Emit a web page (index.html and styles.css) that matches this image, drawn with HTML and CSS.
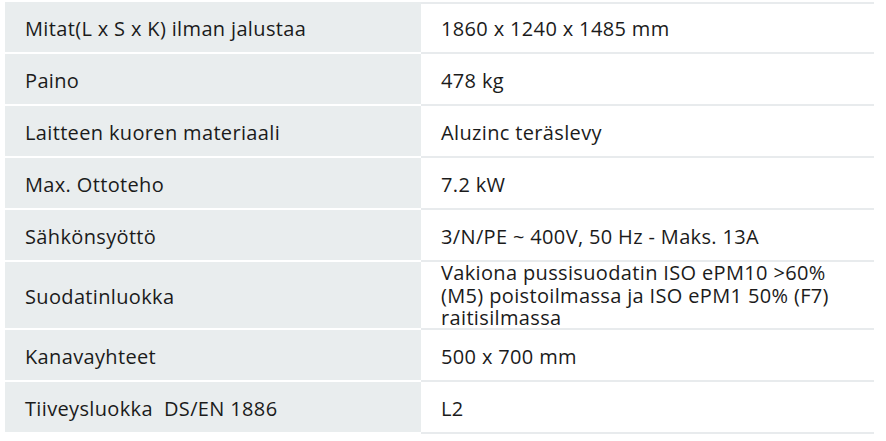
FILE: index.html
```html
<!DOCTYPE html>
<html lang="fi">
<head>
<meta charset="utf-8">
<title>Tekniset tiedot</title>
<link rel="stylesheet" href="styles.css">
</head>
<body>
<div class="specs">
  <div class="row first"><div class="k">Mitat(L x S x K) ilman jalustaa</div><div class="v">1860 x 1240 x 1485 mm</div></div>
  <div class="row"><div class="k">Paino</div><div class="v">478 kg</div></div>
  <div class="row"><div class="k">Laitteen kuoren materiaali</div><div class="v">Aluzinc teräslevy</div></div>
  <div class="row"><div class="k">Max. Ottoteho</div><div class="v">7.2 kW</div></div>
  <div class="row"><div class="k">Sähkönsyöttö</div><div class="v">3/N/PE ~ 400V, 50 Hz - Maks. 13A</div></div>
  <div class="row tall"><div class="k">Suodatinluokka</div><div class="v multi">Vakiona pussisuodatin ISO ePM10 &gt;60%<br>(M5) poistoilmassa ja ISO ePM1 50% (F7)<br>raitisilmassa</div></div>
  <div class="row"><div class="k">Kanavayhteet</div><div class="v">500 x 700 mm</div></div>
  <div class="row"><div class="k">Tiiveysluokka&nbsp; DS/EN 1886</div><div class="v">L2</div></div>
</div>
</body>
</html>
```
FILE: styles.css
```css
html, body {
  margin: 0;
  padding: 0;
  background: #ffffff;
}
body {
  font-family: "Open Sans", "Liberation Sans", Arial, sans-serif;
  font-size: 20px;
  letter-spacing: 0.35px;
  color: #1b1b1b;
}
.specs {
  margin: 2px 0 0 5px;
  width: 869px;
  display: flex;
  flex-direction: column;
}
.row {
  display: grid;
  grid-template-columns: 416px 453px;
  height: 52px;
}
.row.tall {
  height: 68px;
}
.k, .v {
  display: flex;
  align-items: center;
  padding-left: 20px;
  padding-top: 2px;
  border-bottom: 2px solid;
  box-sizing: border-box;
  white-space: nowrap;
}
.k {
  background: #e9edee;
  border-bottom-color: #ffffff;
}
.v {
  background: #ffffff;
  border-bottom-color: #e8ebed;
}
.row.first .v {
  box-shadow: inset 0 2px 0 #e8ebed;
}
.v.multi {
  line-height: 22.5px;
  align-items: flex-start;
  padding-top: 0;
  overflow: hidden;
}
```
